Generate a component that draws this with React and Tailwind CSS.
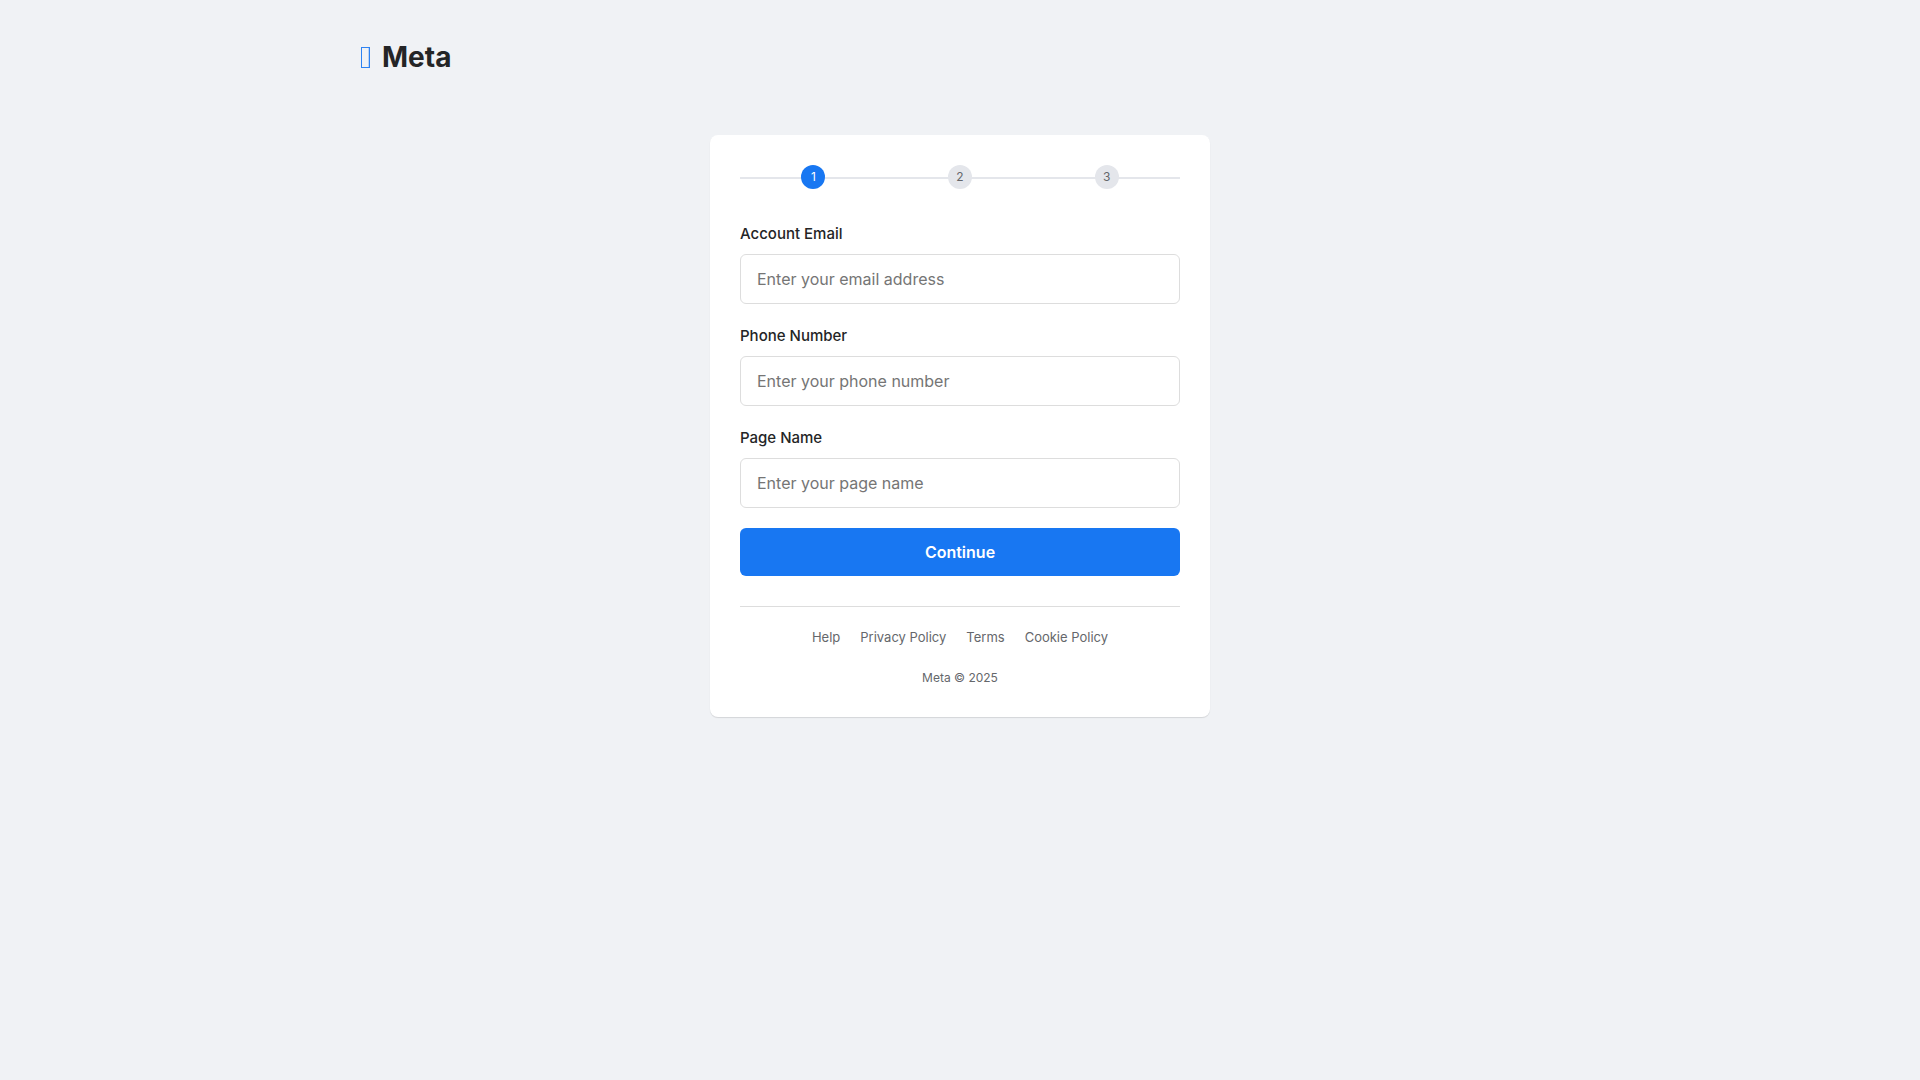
import { useState } from "react";

const steps = [1, 2, 3];

const fields = [
  {
    id: "email",
    label: "Account Email",
    type: "email",
    placeholder: "Enter your email address",
  },
  {
    id: "phone",
    label: "Phone Number",
    type: "tel",
    placeholder: "Enter your phone number",
  },
  {
    id: "page",
    label: "Page Name",
    type: "text",
    placeholder: "Enter your page name",
  },
];

const links = ["Help", "Privacy Policy", "Terms", "Cookie Policy"];

function Logo() {
  return (
    <div className="flex items-center gap-2.5">
      <svg width="12" height="23" viewBox="0 0 12 23" aria-hidden="true">
        <rect x="8" y="2" width="1" height="19" fill="#1877f2" opacity="0.25" />
        <rect
          x="1.5"
          y="1.5"
          width="8"
          height="20"
          fill="none"
          stroke="#1877f2"
          strokeOpacity="0.9"
        />
      </svg>
      <span className="text-[28px] leading-[35px] font-bold">Meta</span>
    </div>
  );
}

function Steps({ current }) {
  return (
    <ol className="relative mb-[33px] flex justify-around">
      <li
        aria-hidden="true"
        className="absolute inset-x-0 top-3 h-0.5 bg-[#e4e6eb]"
      />
      {steps.map((step) => (
        <li
          key={step}
          className={`relative flex size-6 items-center justify-center rounded-full text-xs ${
            step === current
              ? "bg-[#1877f2] text-white"
              : "bg-[#e4e6eb] text-[#65676b]"
          }`}
        >
          {step}
        </li>
      ))}
    </ol>
  );
}

export default function App() {
  const [values, setValues] = useState({ email: "", phone: "", page: "" });

  const handleChange = (e) =>
    setValues({ ...values, [e.target.name]: e.target.value });

  return (
    <div className="min-h-screen bg-[#f0f2f5] font-['Inter',sans-serif] text-[#242526]">
      <header className="mx-auto max-w-[1200px] py-10">
        <Logo />
      </header>
      <main className="mx-auto mt-5 max-w-[500px] rounded-lg bg-white p-[30px] shadow-[0_1px_1px_rgba(0,0,0,0.12)]">
        <Steps current={1} />
        <form onSubmit={(e) => e.preventDefault()}>
          {fields.map((field) => (
            <div key={field.id} className="mb-5">
              <label
                htmlFor={field.id}
                className="mb-2 block text-[15px] leading-6 font-medium"
              >
                {field.label}
              </label>
              <input
                id={field.id}
                name={field.id}
                type={field.type}
                placeholder={field.placeholder}
                value={values[field.id]}
                onChange={handleChange}
                className="block h-[50px] w-full rounded-md border border-[#dddddd] px-4 text-base placeholder:text-[#757575] focus:border-[#1877f2] focus:outline-none"
              />
            </div>
          ))}
          <button
            type="submit"
            className="block h-12 w-full cursor-pointer rounded-md bg-[#1877f2] text-base font-semibold text-white hover:bg-[#166fe5]"
          >
            Continue
          </button>
        </form>
        <footer className="mt-[30px] border-t border-[#dddddd] pt-5 text-center text-[#65676b]">
          <nav className="flex flex-wrap justify-center gap-x-5">
            {links.map((link) => (
              <a
                key={link}
                href="#"
                className="text-[13px] leading-5 hover:underline"
              >
                {link}
              </a>
            ))}
          </nav>
          <p className="mt-[22px] text-xs leading-[18px]">Meta © 2025</p>
        </footer>
      </main>
    </div>
  );
}
